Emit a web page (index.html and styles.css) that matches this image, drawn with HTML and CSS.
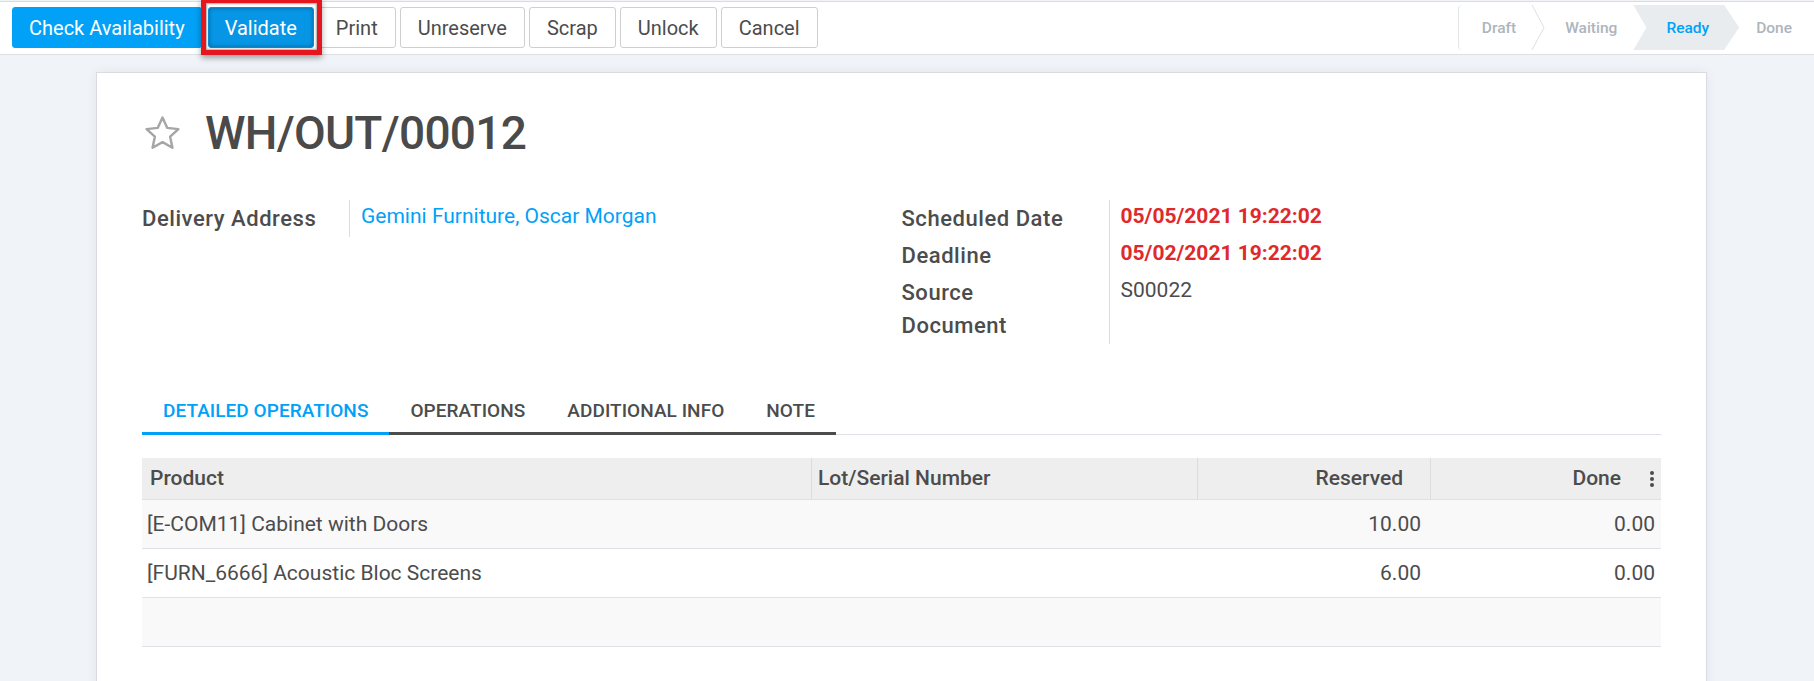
FILE: index.html
```html
<!DOCTYPE html>
<html lang="en">
<head>
<meta charset="utf-8">
<title>WH/OUT/00012</title>
<link rel="stylesheet" href="styles.css">
</head>
<body>
<header class="control-panel">
  <div class="actions">
    <button class="btn btn-primary">Check Availability</button>
    <span class="highlight"><button class="btn btn-primary btn-pressed">Validate</button></span>
    <button class="btn">Print</button>
    <button class="btn">Unreserve</button>
    <button class="btn">Scrap</button>
    <button class="btn">Unlock</button>
    <button class="btn">Cancel</button>
  </div>
  <div class="statusbar">
    <span class="st st-draft">Draft</span>
    <svg class="chev" viewBox="0 0 14 45" width="14" height="45"><polyline points="1,0 13,22.5 1,45" fill="none" stroke="#dcdfe3" stroke-width="1"/></svg>
    <span class="st st-waiting">Waiting</span>
    <span class="st st-ready">Ready</span>
    <span class="st st-done">Done</span>
  </div>
</header>

<main class="content">
  <div class="sheet">
    <div class="title-row">
      <svg class="star" viewBox="0 0 24 24" width="41" height="39"><path d="M12 2.2l2.95 6.35 6.85.75-5.1 4.65 1.43 6.8L12 17.3l-6.13 3.45 1.43-6.8-5.1-4.65 6.85-.75z" fill="none" stroke="#a6a6a6" stroke-width="1.5" stroke-linejoin="round"/></svg>
      <h1 class="title">WH/OUT/00012</h1>
    </div>

    <div class="groups">
      <table class="group">
        <tr>
          <td class="lbl">Delivery Address</td>
          <td class="val"><a class="link" href="#">Gemini Furniture, Oscar Morgan</a></td>
        </tr>
      </table>
      <table class="group">
        <tr>
          <td class="lbl">Scheduled Date</td>
          <td class="val val-danger">05/05/2021 19:22:02</td>
        </tr>
        <tr>
          <td class="lbl">Deadline</td>
          <td class="val val-danger">05/02/2021 19:22:02</td>
        </tr>
        <tr>
          <td class="lbl">Source<br>Document</td>
          <td class="val">S00022</td>
        </tr>
      </table>
    </div>

    <ul class="tabs">
      <li class="tab active">Detailed Operations</li>
      <li class="tab">Operations</li>
      <li class="tab">Additional Info</li>
      <li class="tab">Note</li>
    </ul>

    <table class="lines">
      <colgroup>
        <col class="c-product">
        <col class="c-lot">
        <col class="c-res">
        <col class="c-done">
      </colgroup>
      <thead>
        <tr>
          <th>Product</th>
          <th class="th-sep">Lot/Serial Number</th>
          <th class="th-sep num th-res">Reserved</th>
          <th class="th-sep num th-done">Done
            <svg class="kebab" viewBox="0 0 4 16" width="4" height="16"><circle cx="2" cy="2" r="2"/><circle cx="2" cy="8" r="2"/><circle cx="2" cy="14" r="2"/></svg>
          </th>
        </tr>
      </thead>
      <tbody>
        <tr>
          <td>[E-COM11] Cabinet with Doors</td>
          <td></td>
          <td class="num td-res">10.00</td>
          <td class="num td-done">0.00</td>
        </tr>
        <tr>
          <td>[FURN_6666] Acoustic Bloc Screens</td>
          <td></td>
          <td class="num td-res">6.00</td>
          <td class="num td-done">0.00</td>
        </tr>
        <tr class="empty">
          <td>&nbsp;</td>
          <td></td>
          <td></td>
          <td></td>
        </tr>
      </tbody>
    </table>
  </div>
</main>
</body>
</html>
```

FILE: styles.css
```css
html, body {
  margin: 0;
  overflow: hidden;
}
body {
  font-family: Roboto, "Liberation Sans", sans-serif;
  color: #4c4c4c;
  background: #f0f4f8;
}

/* ---------- control panel ---------- */
.control-panel {
  display: flex;
  justify-content: space-between;
  align-items: center;
  background: #fff;
  margin-top: 1px;
  border-top: 1px solid #dcdcdc;
  border-bottom: 1px solid #dcdfe3;
  padding: 5px 0 6px 12px;
}
.actions {
  display: flex;
  gap: 4px;
}
.btn {
  font-family: Roboto, "Liberation Sans", sans-serif;
  font-size: 20px;
  font-weight: 400;
  line-height: 1;
  height: 41px;
  padding: 0 17px;
  border: 1px solid #cfcfcf;
  border-radius: 3px;
  background: #fff;
  color: #4c4c4c;
  cursor: pointer;
}
.btn-primary {
  background: #00a1f7;
  border-color: #00a1f7;
  color: #fff;
}
.btn-primary:first-child {
  padding: 0 16px;
}
.btn-pressed {
  background: #0796e6;
  border-color: #0a8cd6;
  box-shadow: inset 0 0 4px rgba(0, 0, 0, 0.35);
}
.highlight {
  position: relative;
  display: flex;
  margin-left: 2px;
}
.highlight::after {
  content: "";
  position: absolute;
  top: -9px;
  left: -7px;
  right: -8px;
  bottom: -7px;
  border: 5px solid #e3171d;
  box-shadow: inset 0 0 2px 1px rgba(0, 0, 0, 0.35), 0 3px 6px rgba(0, 0, 0, 0.35);
  pointer-events: none;
}

/* ---------- statusbar ---------- */
.statusbar {
  display: flex;
  align-items: stretch;
  height: 45px;
  margin: -2px 0;
  border-left: 1px solid #e3e5e8;
  border-radius: 4px 0 0 4px;
}
.st {
  display: flex;
  align-items: center;
  font-size: 15.5px;
  font-weight: 500;
  color: #adb5bd;
  white-space: nowrap;
}
.chev {
  display: block;
  flex: none;
}
.st-draft { padding: 0 15px 0 23px; }
.st-waiting { padding: 0 16px 0 20px; }
.st-ready {
  padding: 0 30px 0 33px;
  background: #e9ecef;
  color: #00a1f7;
  clip-path: polygon(0 0, calc(100% - 15px) 0, 100% 50%, calc(100% - 15px) 100%, 0 100%, 13px 50%);
}
.st-done { padding: 0 22px 0 17px; }

/* ---------- sheet ---------- */
.content {
  padding: 17px 0 0 96px;
}
.sheet {
  box-sizing: border-box;
  width: 1611px;
  min-height: 720px;
  background: #fff;
  border: 1px solid #d8dbdf;
  box-shadow: 0 0 12px rgba(0, 0, 0, 0.06);
  padding: 32px 45px 0;
}
.title-row {
  display: flex;
  align-items: center;
  gap: 22px;
}
.star {
  display: block;
  flex: none;
}
.title {
  margin: 0;
  font-size: 46px;
  line-height: 56px;
  font-weight: 500;
  letter-spacing: -0.7px;
  color: #4a4a4a;
}

/* ---------- field groups ---------- */
.groups {
  display: grid;
  grid-template-columns: 1fr 1fr;
  margin-top: 39px;
  align-items: start;
}
.group {
  border-collapse: separate;
  border-spacing: 0;
  table-layout: fixed;
  width: 100%;
  font-size: 21px;
}
.lbl {
  box-sizing: border-box;
  width: 208px;
  padding: 2px 8px 2px 0;
  border-right: 1px solid #dcdcdc;
  font-size: 22px;
  font-weight: 500;
  letter-spacing: 0.55px;
  line-height: 33px;
  vertical-align: top;
  white-space: nowrap;
}
.val {
  padding: 0 0 4px 11px;
  line-height: 33px;
  vertical-align: top;
}
.val-danger {
  color: #e0292b;
  font-weight: 700;
}
.link {
  color: #00a1f7;
  text-decoration: none;
}

/* ---------- tabs ---------- */
.tabs {
  display: flex;
  list-style: none;
  margin: 46px 0 0;
  padding: 0;
  border-bottom: 1px solid #dee2e6;
}
.tab {
  font-size: 19px;
  line-height: 28.5px;
  font-weight: 500;
  text-transform: uppercase;
  letter-spacing: 0.05px;
  padding: 7px 21px 6px;
  border-bottom: 3px solid #4c4c4c;
  margin-bottom: -1px;
  color: #4c4c4c;
}
.tab.active {
  color: #00a1f7;
  border-bottom-color: #00a1f7;
}

/* ---------- lines table ---------- */
.lines {
  width: 100%;
  margin-top: 23px;
  border-collapse: separate;
  border-spacing: 0;
  table-layout: fixed;
  font-size: 21px;
}
.c-product { width: 669px; }
.c-lot { width: 386px; }
.c-res { width: 233px; }
.c-done { width: 231px; }
.lines th {
  background: #eeeeee;
  font-weight: 500;
  line-height: 31px;
  padding: 5px 8px 5px;
  text-align: left;
  border-bottom: 1px solid #dee2e6;
  white-space: nowrap;
}
.lines th.th-sep {
  border-left: 1px solid #dcdcdc;
  padding-left: 6px;
}
.lines .num { text-align: right; }
.lines th.th-res { padding-right: 27px; }
.lines th.th-done {
  position: relative;
  padding-right: 40px;
}
.kebab {
  position: absolute;
  right: 7px;
  top: 13px;
  fill: #4c4c4c;
}
.lines td {
  line-height: 31px;
  padding: 9px 5px 8px;
  border-bottom: 1px solid #dee2e6;
  white-space: nowrap;
}
.lines tbody tr:nth-child(odd) td {
  background: #f9f9f9;
}
.lines td.td-res { padding-right: 9px; }
.lines td.td-done { padding-right: 6px; }
```
